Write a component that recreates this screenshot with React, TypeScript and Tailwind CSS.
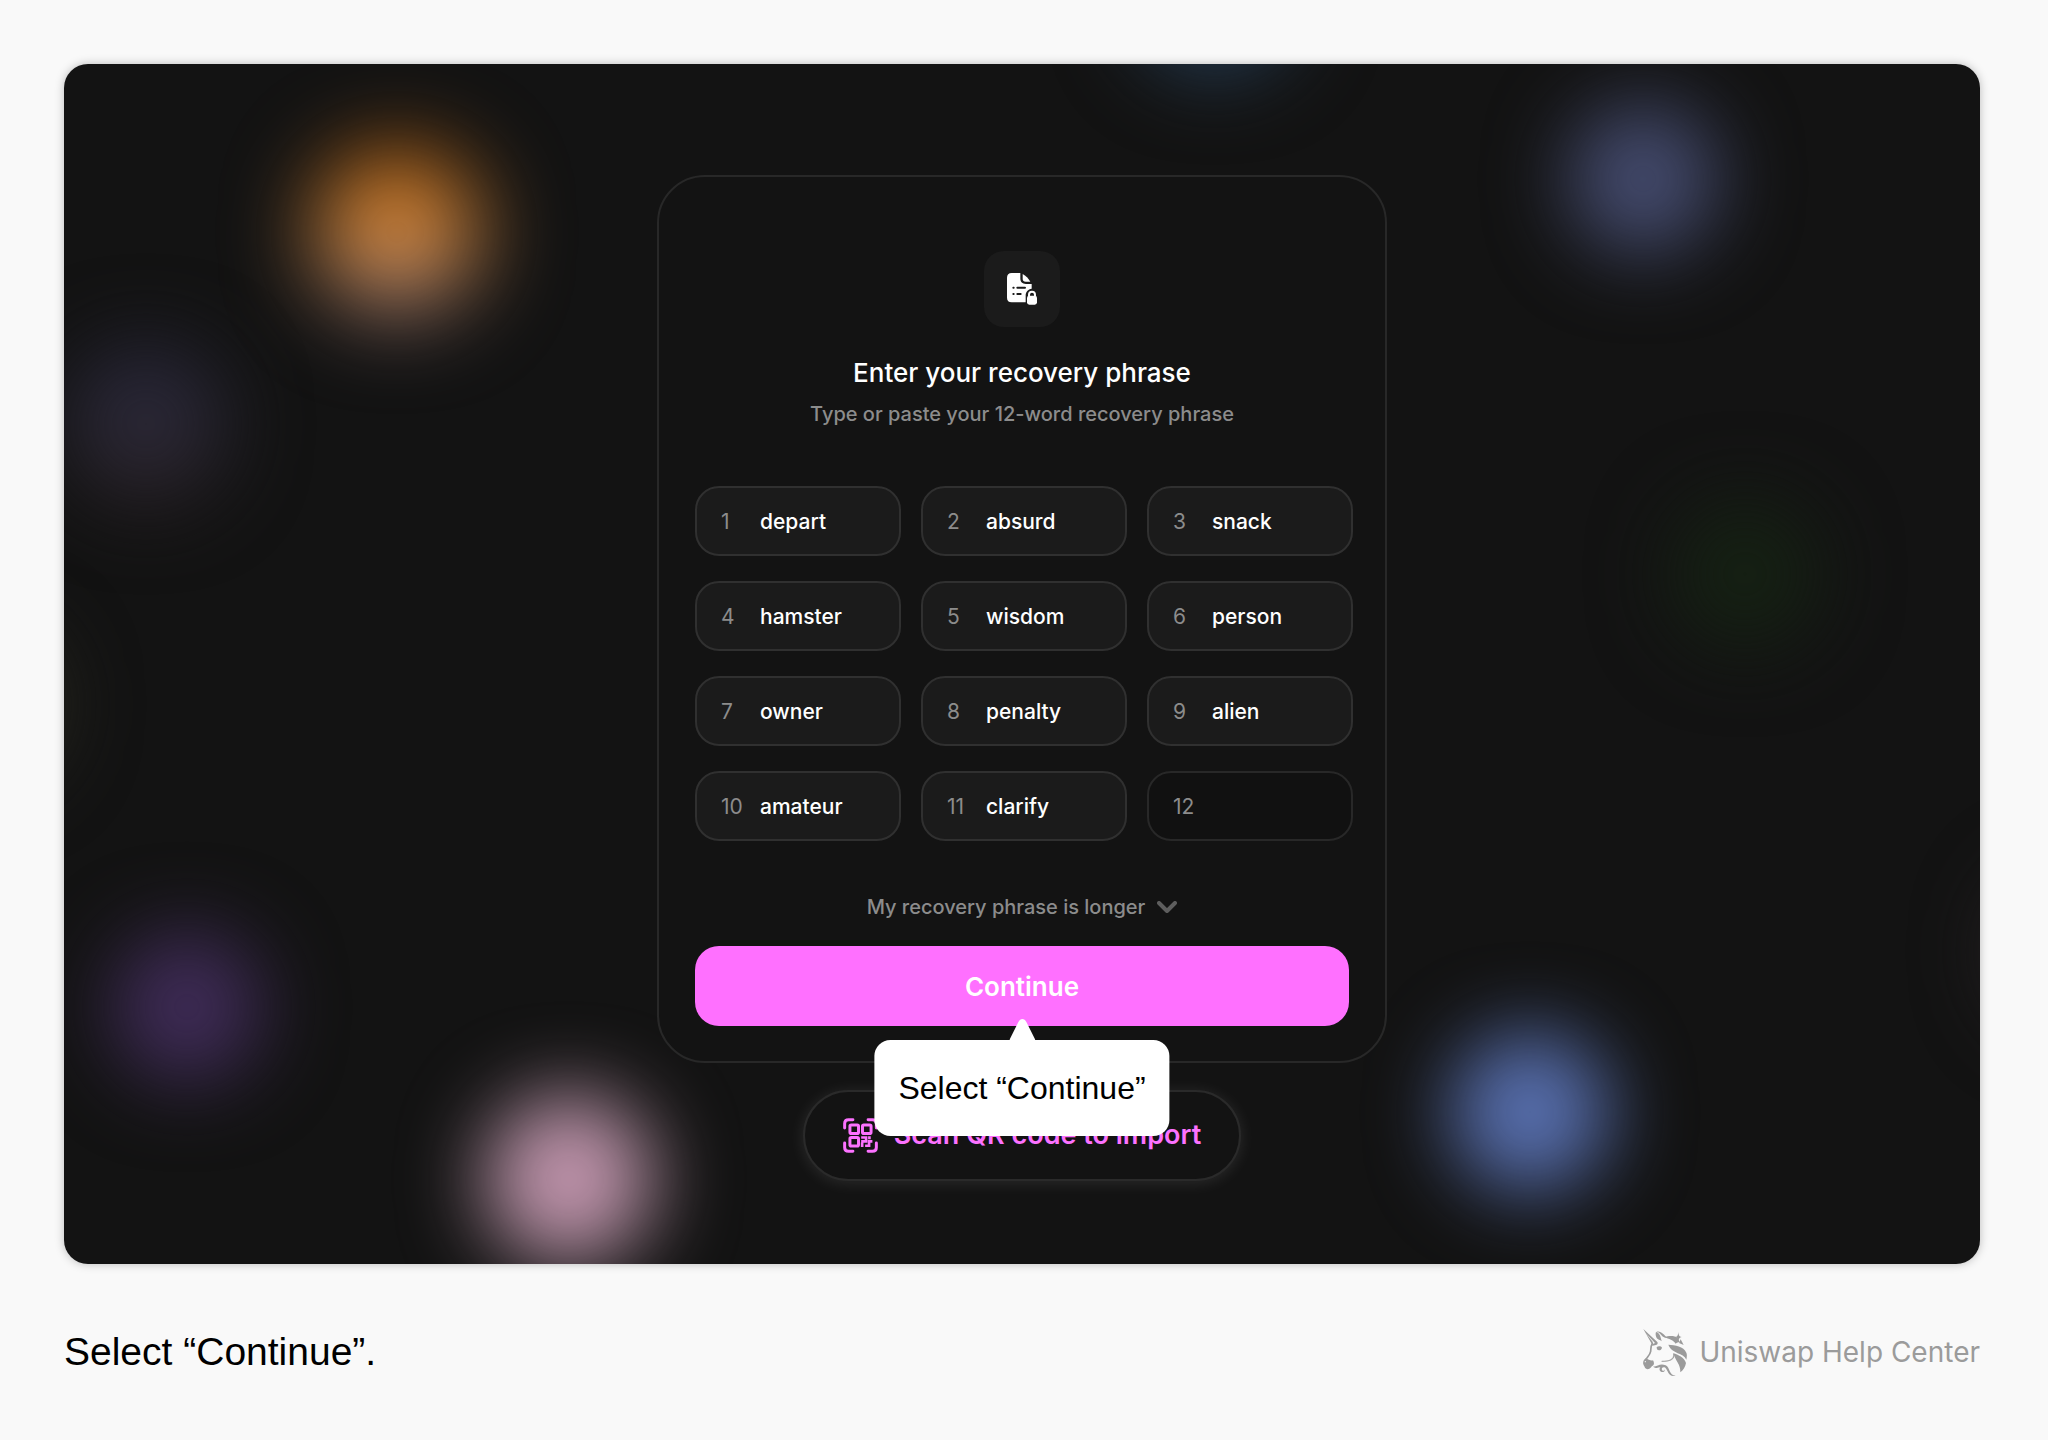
import clsx from "clsx";

const words = [
  "depart",
  "absurd",
  "snack",
  "hamster",
  "wisdom",
  "person",
  "owner",
  "penalty",
  "alien",
  "amateur",
  "clarify",
  "",
];

// soft token colours floating behind the card
const blobs = [
  "left-[251px] top-[86px] size-[164px] blur-[44px] bg-linear-to-b from-[#c06000] via-[#dc8e38] to-[#8c7480]",
  "left-[2px] top-[280px] size-[160px] blur-[40px] bg-linear-to-b from-[#262438] via-[#2b2938] to-[#2a2024]",
  "left-[48px] top-[868px] size-[150px] blur-[40px] bg-[#402c59]",
  "left-[418px] top-[1028px] size-[174px] blur-[40px] bg-radial from-[#d496b8] to-[#948a90]",
  "right-[682px] -top-[156px] size-[166px] blur-[40px] bg-[#253c54]",
  "right-[262px] top-[40px] size-[150px] blur-[40px] bg-[#454c70]",
  "right-[162px] top-[437px] size-[146px] blur-[40px] bg-[#152113]",
  "right-[370px] top-[968px] size-[160px] blur-[40px] bg-[#5870b0]",
  "-left-[168px] top-[560px] size-[160px] blur-[40px] bg-[#2a2a20]",
  "-right-[176px] top-[807px] size-[160px] blur-[40px] bg-[#2a2427]",
];

function PhraseIcon() {
  return (
    <svg viewBox="0 0 90 95" className="w-[30px]" aria-hidden="true">
      <path
        fill="#fff"
        d="M14 0h26v16c0 11 6 17 17 17h17v14c-11 2-18 10-18 20v21H14C5 88 0 83 0 74V14C0 5 5 0 14 0Z"
      />
      <path fill="#fff" d="M47 3c9 5 18 14 23 23H56c-6 0-9-3-9-9Z" />
      <path
        d="M19 44h1M31 44h23M19 63h1M31 63h10"
        stroke="#1b1b1b"
        strokeWidth="6"
        strokeLinecap="round"
      />
      <path
        d="M66 70v-5a9 9 0 0 1 18 0v5"
        fill="none"
        stroke="#fff"
        strokeWidth="6"
      />
      <rect x="60" y="68" width="30" height="27" rx="7" fill="#fff" />
    </svg>
  );
}

function QrIcon() {
  return (
    <svg
      viewBox="0 0 106 106"
      className="size-[35px] shrink-0"
      fill="none"
      stroke="currentColor"
      strokeWidth="9"
      strokeLinecap="round"
      aria-hidden="true"
    >
      <path d="M5 30V17C5 9 9 5 17 5h13M76 5h13c8 0 12 4 12 12v13M101 76v13c0 8-4 12-12 12H76M30 101H17c-8 0-12-4-12-12V76" />
      <g strokeLinejoin="round">
        <rect x="21" y="21" width="26" height="26" rx="4" />
        <rect x="59" y="21" width="26" height="26" rx="4" />
        <rect x="21" y="59" width="26" height="26" rx="4" />
      </g>
      <path
        strokeWidth="8"
        strokeLinecap="butt"
        d="M55 59h12M70 55v16H55M58 74v14M67 84h12V71h10M80 55v9"
      />
    </svg>
  );
}

function ChevronIcon() {
  return (
    <svg viewBox="0 0 20 12" className="w-5" fill="none" aria-hidden="true">
      <path
        d="m2 2 8 8 8-8"
        stroke="#5e5e5e"
        strokeWidth="4"
        strokeLinecap="round"
        strokeLinejoin="round"
      />
    </svg>
  );
}

function UnicornLogo() {
  return (
    <svg
      viewBox="0 0 132 141"
      className="w-11"
      fill="currentColor"
      aria-hidden="true"
    >
      {/* horn */}
      <path d="M1 0 43 39c2 3 1 7-2 8-3 2-8 1-12 3l-4-3 11-5L8 12l22 28-4 4Z" />
      {/* ear */}
      <path d="M39 9c7 1 13 8 15 20l2 8-4-3c-6-2-11-5-12-9-2-5-3-11-1-16Z" />
      <path d="M40 7c18 0 24 13 34 20-6-1-12-1-16-5-4-5-10-11-18-15Z" />
      {/* face and muzzle */}
      <path
        d="M28 43c-5 8-4 15-5 24-2 11-10 17-15 26"
        fill="none"
        stroke="currentColor"
        strokeWidth="5"
        strokeLinecap="round"
      />
      <path d="M8 88c-6 4-9 12-7 18 1 4 3 5 4 8 2 6 9 8 14 5 5-3 6-7 10-9 5-3 5-10 1-16-7 2-13-2-22-6Z" />
      <circle cx="7" cy="98" r="2" fill="#f9f9f9" />
      <path d="M41 55c4-5 13-4 16 1-1 5-5 8-9 8-5 0-7-4-7-9Z" />
      {/* jaw */}
      <path
        d="M92 74c5 16-8 23-36 23 22 1 38-6 36-23Z"
        stroke="currentColor"
        strokeWidth="2"
      />
      {/* mane */}
      <path d="M64 25c12-5 30-6 40 2 3 3 3 7 6 12-4 1-9 2-12 5-6-9-20-15-34-19Z" />
      <path d="M106 9c1 10 2 13 10 15-7 2-9 5-10 14-1-9-3-12-9-14 7-2 8-5 9-15Z" />
      <path d="m113 31 9 17-14-6Z" />
      <path d="M76 47c20 2 46 4 54 24 3 7 1 14 0 21-9-23-42-15-54-45Z" />
      <path d="M91 73c14 4 33 13 38 29-2 11-8 21-17 28 1-25-14-32-21-57Z" />
      {/* neck swirl */}
      <path d="M30 113c16-2 22-11 38-4 14 6 9 31 30 31-22 6-23-17-31-24-9-5-14 4-8 9 4 2 7-2 5-5 4 5-1 10-7 9-7-1-10-9-5-14-7 1-13 4-22-2Z" />
    </svg>
  );
}

export default function App() {
  return (
    <div className="min-h-screen bg-[#f9f9f9] pt-16 pr-[68px] pl-16 font-['Inter',sans-serif]">
      <main className="relative flex flex-col items-center gap-[27px] overflow-hidden rounded-3xl bg-[#131313] pt-[111px] pb-[83px] shadow-[0_0_10px_rgba(0,0,0,0.25)]">
        {blobs.map((blob) => (
          <div key={blob} className={clsx("absolute rounded-full", blob)} />
        ))}

        <form
          className="relative z-10 flex w-full max-w-[730px] flex-col items-center rounded-[48px] border-2 border-[#282828] bg-[#131313] px-9 pt-[74px] pb-[35px]"
          onSubmit={(e) => e.preventDefault()}
        >
          <div className="flex size-[76px] items-center justify-center rounded-[20px] bg-[#1b1b1b]">
            <PhraseIcon />
          </div>
          <h1 className="mt-7 text-[26px] leading-9 font-medium text-white">
            Enter your recovery phrase
          </h1>
          <p className="mt-[9px] text-[20px] leading-7 font-medium text-[#8c8c8c]">
            Type or paste your 12-word recovery phrase
          </p>

          <div className="mt-[58px] -mr-1 grid grid-cols-3 gap-x-5 gap-y-[25px] self-stretch">
            {words.map((word, i) => (
              <label
                key={i}
                className={clsx(
                  "flex h-[70px] items-center rounded-3xl border-2 pt-[2px] pl-6 text-[21px]",
                  word
                    ? "border-[#303030] bg-[#1b1b1b]"
                    : "border-[#282828] bg-[#111111]"
                )}
              >
                <span className="w-[39px] shrink-0 text-[#8c8c8c]">
                  {i + 1}
                </span>
                <input
                  type="text"
                  defaultValue={word}
                  className="w-full min-w-0 bg-transparent font-medium text-white outline-none"
                />
              </label>
            ))}
          </div>

          <button
            type="button"
            className="mt-[52px] flex items-center gap-3 text-[20px] leading-7 font-medium text-[#8c8c8c]"
          >
            My recovery phrase is longer
            <ChevronIcon />
          </button>

          <div className="relative mt-[25px] self-stretch">
            <button
              type="submit"
              className="h-20 w-full rounded-3xl bg-[#ff70ff] text-[26px] font-semibold text-white"
            >
              Continue
            </button>
            <div
              role="tooltip"
              className="absolute top-full left-1/2 mt-[14px] -translate-x-1/2 rounded-2xl bg-white px-6 py-6 font-['Liberation_Sans',sans-serif] text-[32px] leading-[48px] whitespace-nowrap text-black"
            >
              <svg
                viewBox="0 0 26 21"
                className="absolute bottom-full left-1/2 w-[26px] -translate-x-1/2"
                fill="#fff"
                aria-hidden="true"
              >
                <path d="M0 21 9 3c2-4 6-4 8 0l9 18Z" />
              </svg>
              Select “Continue”
            </div>
          </div>
        </form>

        <button
          type="button"
          className="relative flex h-[91px] items-center gap-4 rounded-full border-2 border-[#2a2a2a] bg-[#131313] px-[38px] text-[27px] font-semibold text-[#fc72ff] shadow-[0_2px_16px_rgba(255,255,255,0.1)]"
        >
          <QrIcon />
          Scan QR code to import
        </button>
      </main>

      <footer className="flex items-center justify-between pt-[60px] pb-12">
        <p className="font-['Liberation_Sans',sans-serif] text-[39px] leading-[56px] text-black">
          Select “Continue”.
        </p>
        <div className="flex items-center gap-3 text-[28px] text-[#9b9b9b]">
          <UnicornLogo />
          Uniswap Help Center
        </div>
      </footer>
    </div>
  );
}
